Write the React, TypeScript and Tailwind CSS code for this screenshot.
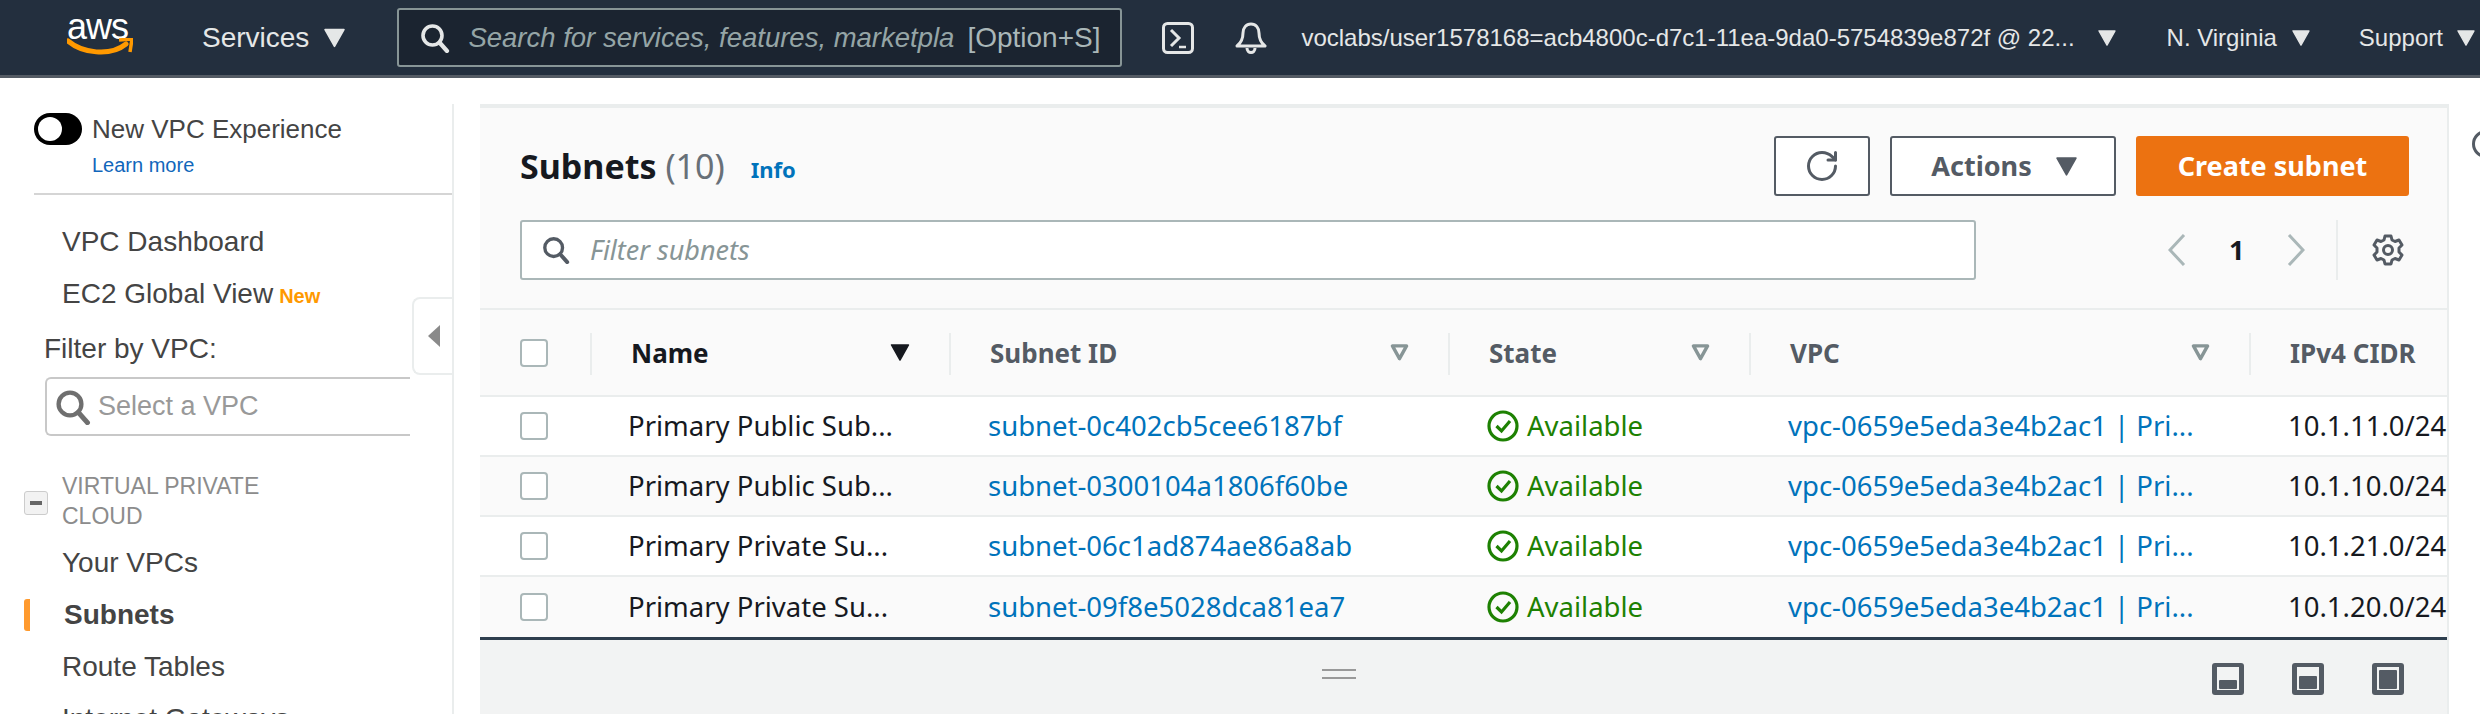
import { RotateCw } from 'lucide-react';

const rows = [
  { name: 'Primary Public Sub...', id: 'subnet-0c402cb5cee6187bf', cidr: '10.1.11.0/24' },
  { name: 'Primary Public Sub...', id: 'subnet-0300104a1806f60be', cidr: '10.1.10.0/24' },
  { name: 'Primary Private Su...', id: 'subnet-06c1ad874ae86a8ab', cidr: '10.1.21.0/24' },
  { name: 'Primary Private Su...', id: 'subnet-09f8e5028dca81ea7', cidr: '10.1.20.0/24' },
];

function Caret({ className }: { className: string }) {
  return (
    <svg viewBox="0 0 20 18" className={className} fill="currentColor">
      <path d="M1 1h18L10 17z" stroke="currentColor" strokeWidth="1.5" strokeLinejoin="round" />
    </svg>
  );
}

function FilterCaret() {
  return (
    <svg viewBox="0 0 20 18" className="w-[19px] h-[17px] shrink-0 text-[#879596]" fill="none">
      <path d="M2.5 2h15L10 15.5z" stroke="currentColor" strokeWidth="3.6" strokeLinejoin="round" />
    </svg>
  );
}

function Search({ className }: { className: string }) {
  return (
    <svg viewBox="0 0 30 30" className={className} fill="none" stroke="currentColor">
      <circle cx="12.5" cy="12.5" r="9.5" strokeWidth="3.6" />
      <path d="M19.5 19.5L27 28" strokeWidth="4.2" strokeLinecap="round" />
    </svg>
  );
}

function Checkbox() {
  return <div className="w-[28px] h-[28px] bg-white border-2 border-[#aab7b8] rounded-[4px]" />;
}

function PaneIcon({ fill }: { fill: string }) {
  return (
    <div className="w-[32px] h-[32px] bg-[#545b64] rounded-[3px] p-[5px] pt-[4px]">
      <div className="w-full h-full bg-[#f2f3f3] flex flex-col justify-end">
        <div className={`${fill} bg-[#545b64] mx-[2px] mb-[1px] rounded-[1px]`} />
      </div>
    </div>
  );
}

function HeaderCell({ label, active, width }: { label: string; active?: boolean; width: string }) {
  return (
    <div className={`${width} h-full flex items-center relative pl-[41px] pr-[39px] justify-between`}>
      <div className="absolute left-0 top-[23px] h-[42px] w-[2px] bg-[#eaeded]" />
      <span className={`text-[26px] font-bold whitespace-nowrap translate-y-[1px] ${active ? 'text-[#16191f]' : 'text-[#545b64]'}`}>{label}</span>
      {label !== 'IPv4 CIDR' &&
        (active ? <Caret className="w-[20px] h-[17px] shrink-0 text-[#16191f]" /> : <FilterCaret />)}
    </div>
  );
}

function SideLink({ children, className }: { children: React.ReactNode; className?: string }) {
  return <div className={`h-[52px] pl-[62px] flex items-center text-[28px] text-[#444] whitespace-nowrap ${className ?? ''}`}>{children}</div>;
}

export default function App() {
  return (
    <div className="w-[2480px] h-[714px] overflow-hidden bg-white flex flex-col font-['Noto_Sans',sans-serif]">
      {/* top nav */}
      <header className="h-[78px] shrink-0 bg-[#232f3e] border-b-[3px] border-[#545b64] flex items-center text-[#e5e7e7] font-['Liberation_Sans',sans-serif] whitespace-nowrap">
        <div className="ml-[67px] w-[66px] h-[42px] relative shrink-0">
          <span className="absolute left-0 top-[-10px] text-[36px] leading-[40px] text-white font-normal tracking-[-1px]">aws</span>
          <svg viewBox="0 0 66 20" className="absolute left-0 top-[21px] w-[66px] h-[20px]" fill="none">
            <path d="M1 3c14 12 42 16 58 3" stroke="#f90" strokeWidth="5" strokeLinecap="round" />
            <path d="M52 2l13-1-2 13" stroke="#f90" strokeWidth="3.5" strokeLinejoin="round" />
          </svg>
        </div>
        <span className="ml-[69px] text-[28px]">Services</span>
        <Caret className="ml-[15px] w-[21px] h-[20px]" />
        <div className="ml-[52px] w-[725px] h-[59px] bg-[#1b2430] border-2 border-[#879596] rounded-[3px] flex items-center pl-[21px]">
          <Search className="w-[30px] h-[30px] text-[#e5e7e7] shrink-0" />
          <span className="ml-[18px] w-[484px] text-[27.5px] italic text-[#95a5a6]">Search for services, features, marketpla</span>
          <span className="ml-[15px] text-[28px] text-[#aab7b8]">[Option+S]</span>
        </div>
        <svg viewBox="0 0 32 32" className="ml-[40px] w-[32px] h-[32px] shrink-0" fill="none">
          <rect x="1.5" y="1.5" width="29" height="29" rx="4" fill="#232f3e" stroke="#e5e7e7" strokeWidth="3" />
          <path d="M9 8l8 8-8 8" stroke="#e5e7e7" strokeWidth="3" />
          <path d="M17 25h7" stroke="#e5e7e7" strokeWidth="2.5" />
        </svg>
        <svg viewBox="0 0 32 34" className="ml-[41px] w-[32px] h-[34px] shrink-0" fill="none" stroke="#e5e7e7" strokeWidth="3">
          <path d="M2 25c5-4 6-8 6-13 0-5 3-9 8-9s8 4 8 9c0 5 1 9 6 13z" strokeLinejoin="round" />
          <path d="M12 27c0 6 8 6 8 0" />
        </svg>
        <span className="ml-[34px] text-[24px]">voclabs/user1578168=acb4800c-d7c1-11ea-9da0-5754839e872f @ 22...</span>
        <Caret className="ml-[23px] w-[18px] h-[16px]" />
        <span className="ml-[51px] text-[24px]">N. Virginia</span>
        <Caret className="ml-[15px] w-[18px] h-[16px]" />
        <span className="ml-[49px] text-[24px]">Support</span>
        <Caret className="ml-[14px] w-[18px] h-[16px]" />
      </header>

      <div className="flex-1 min-h-0 flex pt-[26px]">
        {/* sidebar */}
        <aside className="w-[454px] shrink-0 h-[636px] pt-[4px] relative font-['Liberation_Sans',sans-serif] border-r-2 border-[#eaeded] overflow-hidden">
          <div className="ml-[34px] h-[87px] border-b-2 border-r-2 -mr-[2px] border-[#d5d5d5] pt-[5px]">
            <div className="flex items-center">
              <div className="w-[48px] h-[32px] bg-black rounded-full flex items-center pl-[4px]">
                <div className="w-[24px] h-[24px] bg-white rounded-full" />
              </div>
              <span className="ml-[10px] text-[26px] leading-[32px] text-[#444]">New VPC Experience</span>
            </div>
            <a className="block ml-[58px] mt-[7px] text-[20px] leading-[26px] text-[#1166bb]">Learn more</a>
          </div>

          <div className="pt-[21px]">
            <SideLink>VPC Dashboard</SideLink>
            <SideLink>
              EC2 Global View
              <span className="ml-[6px] mt-[3px] text-[20px] font-bold text-[#ff9900]">New</span>
            </SideLink>
            <div className="pl-[44px] mt-[5px] text-[28px] leading-[48px] text-[#444]">Filter by VPC:</div>
            <div className="ml-[45px] mt-[4px] w-[365px] h-[59px] border-2 border-r-0 border-[#c8c8c8] rounded-l-[6px] flex items-center pl-[8px]">
              <Search className="w-[36px] h-[36px] text-[#6f6f6f] shrink-0" />
              <span className="ml-[7px] text-[27px] text-[#999]">Select a VPC</span>
            </div>
            <div className="mt-[35px] ml-[24px] flex items-center">
              <div className="w-[24px] h-[24px] rounded-[3px] border border-[#ccc] bg-[#f2f2f2] flex items-center justify-center translate-y-[2px]">
                <div className="w-[12px] h-[4px] bg-[#666]" />
              </div>
              <div className="ml-[14px] text-[23px] leading-[30px] text-[#8c8c8c]">
                VIRTUAL PRIVATE
                <br />
                CLOUD
              </div>
            </div>
            <div className="mt-[6px]">
              <SideLink>Your VPCs</SideLink>
              <div className="relative">
                <div className="absolute left-[24px] top-[10px] w-[6px] h-[32px] bg-[#ff9a2e] rounded-l-[3px]" />
                <SideLink className="font-bold !pl-[64px]">Subnets</SideLink>
              </div>
              <SideLink>Route Tables</SideLink>
              <SideLink>Internet Gateways</SideLink>
            </div>
          </div>

          {/* collapse tab */}
          <div className="absolute left-[412px] top-[193px] w-[42px] h-[78px] bg-white border-2 border-r-0 border-[#eaeded] rounded-l-[8px] flex items-center pl-[14px]">
            <svg viewBox="0 0 12 22" className="w-[12px] h-[22px]" fill="#8a8a8a">
              <path d="M12 0v22L0 11z" />
            </svg>
          </div>
        </aside>

        {/* main panel */}
        <main className="ml-[26px] w-[1969px] shrink-0 h-[610px] bg-[#fafafa] border-t-4 border-r-2 border-[#eaeded] flex flex-col overflow-hidden">
          <div className="h-[202px] shrink-0 pl-[40px] border-b-2 border-[#eaeded]">
            <div className="flex items-center pt-[28px] h-[88px]">
              <h1 className="text-[34px] font-bold text-[#16191f] whitespace-nowrap">
                Subnets <span className="font-normal text-[#687078]">(10)</span>
              </h1>
              <a className="ml-[26px] mt-[6px] text-[22px] font-bold text-[#0073bb]">Info</a>
              <div className="ml-auto mr-[38px] flex gap-[20px]">
                <button className="w-[96px] h-[60px] bg-white border-2 border-[#545b64] rounded-[3px] flex items-center justify-center">
                  <RotateCw className="w-[36px] h-[36px] text-[#545b64]" strokeWidth={2} />
                </button>
                <button className="w-[226px] h-[60px] bg-white border-2 border-[#545b64] rounded-[3px] flex items-center justify-center gap-[24px] pl-[2px] text-[27px] font-bold text-[#545b64]">
                  Actions
                  <Caret className="w-[21px] h-[19px]" />
                </button>
                <button className="w-[273px] h-[60px] bg-[#ec7211] rounded-[3px] text-[27px] font-bold text-white">Create subnet</button>
              </div>
            </div>
            <div className="mt-[24px] flex items-center">
              <div className="w-[1456px] h-[60px] bg-white border-2 border-[#aab7b8] rounded-[3px] flex items-center pl-[20px]">
                <Search className="w-[28px] h-[28px] text-[#545b64] shrink-0" />
                <span className="ml-[20px] text-[27px] italic text-[#879596]">Filter subnets</span>
              </div>
              <svg viewBox="0 0 18 32" className="ml-[192px] w-[18px] h-[32px]" fill="none" stroke="#aab7b8" strokeWidth="3">
                <path d="M16 1L2 16l14 15" />
              </svg>
              <span className="ml-[43px] text-[27px] font-bold text-[#16191f]">1</span>
              <svg viewBox="0 0 18 32" className="ml-[43px] w-[18px] h-[32px]" fill="none" stroke="#aab7b8" strokeWidth="3">
                <path d="M2 1l14 15L2 31" />
              </svg>
              <div className="ml-[31px] w-[2px] h-[60px] bg-[#eaeded]" />
              <svg viewBox="0 0 32 32" className="ml-[34px] w-[32px] h-[32px]" fill="none" stroke="#545b64" strokeWidth="3" strokeLinejoin="round">
                <path d="M13 2h6l1 4 3 1.500 4-1.500 3 5-3 3v4l3 3-3 5-4-1.500-3 1.500-1 4h-6l-1-4-3-1.500-4 1.500-3-5 3-3v-4l-3-3 3-5 4 1.500 3-1.500z" />
                <circle cx="16" cy="16" r="4.500" />
              </svg>
            </div>
          </div>

          {/* table head */}
          <div className="h-[87px] shrink-0 flex border-b-2 border-[#eaeded]">
            <div className="w-[110px] shrink-0 pl-[40px] flex items-center">
              <Checkbox />
            </div>
            <HeaderCell label="Name" active width="w-[359px] shrink-0" />
            <HeaderCell label="Subnet ID" width="w-[499px] shrink-0" />
            <HeaderCell label="State" width="w-[301px] shrink-0" />
            <HeaderCell label="VPC" width="w-[500px] shrink-0" />
            <HeaderCell label="IPv4 CIDR" width="w-[198px] shrink-0" />
          </div>

          {rows.map((row, i) => (
            <div key={row.id} className={`h-[60px] shrink-0 flex items-center text-[27.5px] whitespace-nowrap ${i % 2 === 0 ? 'bg-white' : 'bg-[#fafafa]'} ${i < 3 ? 'border-b-2 border-[#eaeded]' : ''}`}>
              <div className="w-[110px] shrink-0 pl-[40px]">
                <Checkbox />
              </div>
              <div className="w-[359px] shrink-0 pl-[38px] text-[#16191f]">{row.name}</div>
              <div className="w-[499px] shrink-0 pl-[39px] text-[#0073bb]">{row.id}</div>
              <div className="w-[301px] shrink-0 pl-[39px] flex items-center text-[#1d8102]">
                <svg viewBox="0 0 32 32" className="w-[32px] h-[32px] shrink-0" fill="none" stroke="#1d8102">
                  <circle cx="16" cy="16" r="14" strokeWidth="3.2" />
                  <path d="M9.500 16l5 5 8.500-10" strokeWidth="3.2" />
                </svg>
                <span className="ml-[8px]">Available</span>
              </div>
              <div className="w-[500px] shrink-0 pl-[39px] text-[#0073bb]">vpc-0659e5eda3e4b2ac1 | Pri...</div>
              <div className="w-[198px] shrink-0 pl-[39px] text-[#16191f]">{row.cidr}</div>
            </div>
          ))}

          {/* split panel bar */}
          <div className="flex-1 bg-[#f2f3f3] border-t-[3px] border-[#2e3e4e] flex items-start">
            <div className="ml-[842px] mt-[29px] w-[34px] flex flex-col gap-[6px]">
              <div className="h-[2px] bg-[#999]" />
              <div className="h-[2px] bg-[#999]" />
            </div>
            <div className="ml-auto mr-[43px] mt-[23px] flex gap-[48px]">
              <PaneIcon fill="h-[9px]" />
              <PaneIcon fill="h-[13px]" />
              <PaneIcon fill="h-[19px]" />
            </div>
          </div>
        </main>

        {/* right edge info icon */}
        <div className="flex-1 min-w-0 overflow-hidden pl-[23px] pt-[26px]">
          <div className="w-[28px] h-[28px] rounded-full border-[3px] border-[#545b64]" />
        </div>
      </div>
    </div>
  );
}
